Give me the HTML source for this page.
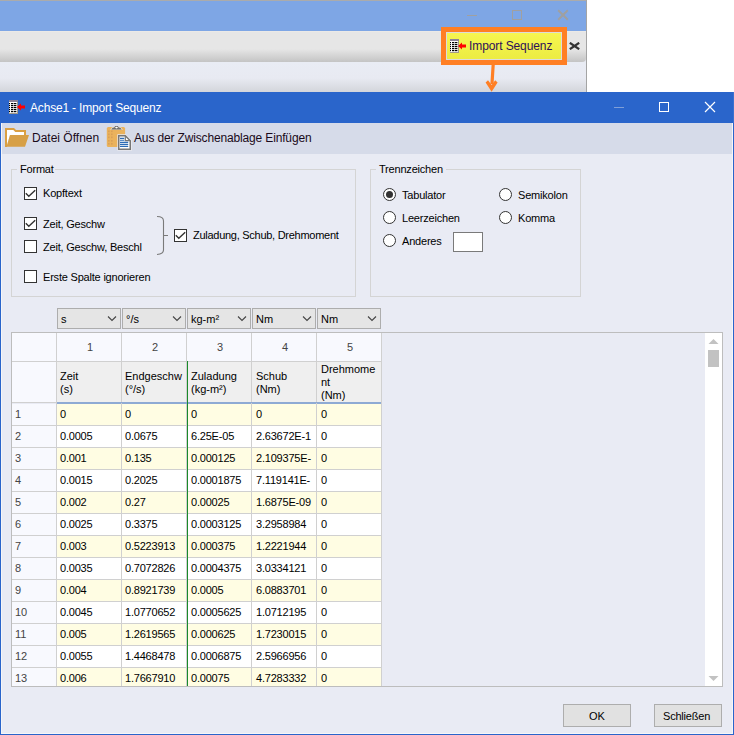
<!DOCTYPE html><html><head><meta charset="utf-8"><style>
html,body{margin:0;padding:0;}
body{width:734px;height:735px;position:relative;overflow:hidden;background:#fff;font-family:"Liberation Sans", sans-serif;}
.t{position:absolute;white-space:pre;}
.b{position:absolute;}
</style></head><body>
<div class="b" style="left:0px;top:0px;width:586px;height:1px;background:#ababab;"></div>
<div class="b" style="left:0px;top:1px;width:586px;height:30px;background:#7ea6e5;"></div>
<div class="b" style="left:467px;top:15px;width:10px;height:1px;background:#a0a0a0;"></div>
<div class="b" style="left:512px;top:10px;width:10px;height:10px;box-sizing:border-box;border:1px solid #a0a0a0;"></div>
<svg class="b" style="left:557px;top:9px" width="12" height="12"><path d="M1.2 1.2 L10.8 10.8 M10.8 1.2 L1.2 10.8" stroke="#a0a0a0" stroke-width="2"/></svg>
<div class="b" style="left:0px;top:31px;width:586px;height:31px;background:#e6e9f1;"></div>
<div class="b" style="left:0px;top:31px;width:586px;height:31px;border-bottom-right-radius:4px;background:linear-gradient(#f0ede8 0px,#e6e6e6 1px,#e6e6e6 18px,#c4c4c4 31px);"></div>
<div class="b" style="left:0px;top:62px;width:586px;height:30px;background:linear-gradient(#e9ecf4 0px,#e8eaf2 16px,#d3d5db 30px);"></div>
<div class="b" style="left:586px;top:0px;width:1px;height:92px;background:#a4a4a4;"></div>
<svg class="b" style="left:569px;top:42px" width="11" height="8"><path d="M0.8 0.8 L10.2 7.2 M10.2 0.8 L0.8 7.2" stroke="#333" stroke-width="2.2"/></svg>
<div class="b" style="left:441px;top:27px;width:126px;height:38px;box-sizing:border-box;border:5px solid #ff7f24;"></div>
<div class="b" style="left:446px;top:32px;width:116px;height:28px;box-sizing:border-box;border:1px solid #dcdcdc;background:linear-gradient(#f6f650,#ecec42);"></div>
<svg class="b" style="left:450px;top:39px" width="17" height="14"><rect x="0" y="0" width="9" height="14" fill="#a49a8a"/><rect x="0" y="0" width="9" height="2" fill="#8a8296"/><rect x="0" y="2" width="8" height="11" fill="#fff"/><rect x="0" y="3" width="1" height="1.2" fill="#000"/><rect x="2" y="3" width="2.4" height="1.2" fill="#000"/><rect x="5" y="3" width="2.4" height="1.2" fill="#000"/><rect x="0" y="5" width="1" height="1.2" fill="#000"/><rect x="2" y="5" width="2.4" height="1.2" fill="#000"/><rect x="5" y="5" width="2.4" height="1.2" fill="#000"/><rect x="0" y="7" width="1" height="1.2" fill="#000"/><rect x="2" y="7" width="2.4" height="1.2" fill="#000"/><rect x="5" y="7" width="2.4" height="1.2" fill="#000"/><rect x="0" y="9" width="1" height="1.2" fill="#000"/><rect x="2" y="9" width="2.4" height="1.2" fill="#000"/><rect x="5" y="9" width="2.4" height="1.2" fill="#000"/><rect x="0" y="11" width="1" height="1.2" fill="#000"/><rect x="2" y="11" width="2.4" height="1.2" fill="#000"/><rect x="5" y="11" width="2.4" height="1.2" fill="#000"/><path d="M8 7 L12 3.5 L12 5.5 L16 5.5 L16 8.5 L12 8.5 L12 10.5 Z" fill="#f00"/></svg>
<div class="t" style="left:469px;top:39.84px;font-size:12px;line-height:12px;color:#2e1058;letter-spacing:-0.1px;">Import Sequenz</div>
<svg class="b" style="left:484px;top:64px" width="16" height="29"><path d="M9.2 0 L8 20" stroke="#ff7f24" stroke-width="3.2" fill="none"/><path d="M1.6 18.6 L4 16.2 L7.6 21 L11.2 16.2 L13.6 18.6 L7.6 27.8 Z" fill="#ff7f24"/></svg>
<div class="b" style="left:0px;top:92px;width:734px;height:643px;background:#2a65cb;"></div>
<div class="b" style="left:1px;top:123px;width:732px;height:31px;background:#d6dbe9;"></div>
<div class="b" style="left:1px;top:154px;width:732px;height:580px;background:#e9ebf4;"></div>
<div class="b" style="left:1px;top:123px;width:1px;height:611px;background:#f6f6f8;"></div>
<div class="b" style="left:732px;top:123px;width:1px;height:611px;background:#f6f6f8;"></div>
<div class="b" style="left:1px;top:733px;width:732px;height:1px;background:#f6f6f8;"></div>
<div class="b" style="left:733px;top:92px;width:1px;height:31px;background:#3a72d0;"></div>
<svg class="b" style="left:9px;top:100px" width="17" height="14"><rect x="0" y="0" width="9" height="14" fill="#a49a8a"/><rect x="0" y="0" width="9" height="2" fill="#8a8296"/><rect x="0" y="2" width="8" height="11" fill="#fff"/><rect x="0" y="3" width="1" height="1.2" fill="#000"/><rect x="2" y="3" width="2.4" height="1.2" fill="#000"/><rect x="5" y="3" width="2.4" height="1.2" fill="#000"/><rect x="0" y="5" width="1" height="1.2" fill="#000"/><rect x="2" y="5" width="2.4" height="1.2" fill="#000"/><rect x="5" y="5" width="2.4" height="1.2" fill="#000"/><rect x="0" y="7" width="1" height="1.2" fill="#000"/><rect x="2" y="7" width="2.4" height="1.2" fill="#000"/><rect x="5" y="7" width="2.4" height="1.2" fill="#000"/><rect x="0" y="9" width="1" height="1.2" fill="#000"/><rect x="2" y="9" width="2.4" height="1.2" fill="#000"/><rect x="5" y="9" width="2.4" height="1.2" fill="#000"/><rect x="0" y="11" width="1" height="1.2" fill="#000"/><rect x="2" y="11" width="2.4" height="1.2" fill="#000"/><rect x="5" y="11" width="2.4" height="1.2" fill="#000"/><path d="M8 7 L12 3.5 L12 5.5 L16 5.5 L16 8.5 L12 8.5 L12 10.5 Z" fill="#f00"/></svg>
<div class="t" style="left:30px;top:102.24px;font-size:12px;line-height:12px;color:#fff;letter-spacing:-0.18px;">Achse1 - Import Sequenz</div>
<div class="b" style="left:614px;top:107px;width:10px;height:1px;background:#7f9fd8;"></div>
<div class="b" style="left:659px;top:102px;width:10px;height:10px;box-sizing:border-box;border:1px solid #fff;"></div>
<svg class="b" style="left:704px;top:101px" width="12" height="12"><path d="M1 1 L11 11 M11 1 L1 11" stroke="#fff" stroke-width="1.2"/></svg>
<svg class="b" style="left:5px;top:128px" width="25" height="19"><path d="M0 0 H9 L11 2 H21 V7 H2 V19 H0 Z" fill="#dba042"/><path d="M2 2 H8.3 L10.3 4 H19 V7 H5 L2 17 Z" fill="#fff"/><path d="M5 7 H24 L20 18.7 H0 L2 17 Z" fill="#d7a047"/></svg>
<div class="t" style="left:32px;top:131.84px;font-size:12px;line-height:12px;color:#1a0a1a;">Datei Öffnen</div>
<svg class="b" style="left:106px;top:125px" width="27" height="26"><rect x="0.8" y="1.9" width="18.3" height="20.1" rx="1.6" fill="#eab25c"/><rect x="2" y="5.5" width="1.6" height="1.6" fill="#d9a058"/><rect x="2" y="8.5" width="1.6" height="1.6" fill="#d9a058"/><rect x="2" y="11.5" width="1.6" height="1.6" fill="#d9a058"/><rect x="2" y="15" width="1.6" height="1.6" fill="#d9a058"/><rect x="2" y="18" width="1.6" height="1.6" fill="#d9a058"/><rect x="5" y="5.5" width="1.6" height="1.6" fill="#d9a058"/><rect x="5" y="8.5" width="1.6" height="1.6" fill="#d9a058"/><rect x="5" y="11.5" width="1.6" height="1.6" fill="#d9a058"/><rect x="5" y="15" width="1.6" height="1.6" fill="#d9a058"/><rect x="5" y="18" width="1.6" height="1.6" fill="#d9a058"/><path d="M4 4.8 L6 2.2 L15 2.2 L17 4.8 Z" fill="#e3dccf"/><path d="M5.3 4.4 Q6.2 2.6 8.2 2.4 L9.2 1 H11.8 L12.8 2.4 Q14.8 2.6 15.7 4.4 Z" fill="#6e6e6e"/><ellipse cx="10.5" cy="2.6" rx="1.3" ry="0.8" fill="#fff"/><path d="M11.3 9.3 H20 L26 15.2 V25.7 H11.3 Z" fill="#e8e8ee"/><path d="M12.75 10.75 H19.3 L24.25 15.7 V24.25 H12.75 Z" fill="#fff" stroke="#777" stroke-width="1.5"/><path d="M19.3 10.75 V15.7 H24.25" fill="none" stroke="#777" stroke-width="1.2"/><path d="M14 13.4 H18.2 M14 15.3 H18.2 M14 17.4 H22.2 M14 19.4 H22.2 M14 21.4 H22.2" stroke="#2d6bb5" stroke-width="1.1"/></svg>
<div class="t" style="left:134px;top:131.54px;font-size:12px;line-height:12px;color:#1a0a1a;letter-spacing:-0.15px;">Aus der Zwischenablage Einfügen</div>
<div class="b" style="left:11px;top:169px;width:345px;height:128px;box-sizing:border-box;border:1px solid #d4d4d4;"></div>
<div class="b" style="left:17px;top:160px;width:38px;height:14px;background:#e9ebf4;"></div>
<div class="t" style="left:20px;top:164.19px;font-size:11px;line-height:11px;color:#000;letter-spacing:-0.2px;">Format</div>
<div class="b" style="left:24px;top:187px;width:13px;height:13px;box-sizing:border-box;border:1px solid #333;background:#fff;"></div>
<svg class="b" style="left:24px;top:187px" width="13" height="13"><path d="M1.8 6.3 L4.8 9.3 L11.2 3.3" fill="none" stroke="#333" stroke-width="1.4"/></svg>
<div class="t" style="left:43px;top:188.19px;font-size:11px;line-height:11px;color:#000;letter-spacing:-0.2px;">Kopftext</div>
<div class="b" style="left:24px;top:217px;width:13px;height:13px;box-sizing:border-box;border:1px solid #333;background:#fff;"></div>
<svg class="b" style="left:24px;top:217px" width="13" height="13"><path d="M1.8 6.3 L4.8 9.3 L11.2 3.3" fill="none" stroke="#333" stroke-width="1.4"/></svg>
<div class="t" style="left:43px;top:218.69px;font-size:11px;line-height:11px;color:#000;letter-spacing:-0.2px;">Zeit, Geschw</div>
<div class="b" style="left:24px;top:240px;width:13px;height:13px;box-sizing:border-box;border:1px solid #333;background:#fff;"></div>
<div class="t" style="left:43px;top:241.69px;font-size:11px;line-height:11px;color:#000;letter-spacing:-0.2px;">Zeit, Geschw, Beschl</div>
<div class="b" style="left:24px;top:270px;width:13px;height:13px;box-sizing:border-box;border:1px solid #333;background:#fff;"></div>
<div class="t" style="left:43px;top:271.69px;font-size:11px;line-height:11px;color:#000;letter-spacing:-0.2px;">Erste Spalte ignorieren</div>
<svg class="b" style="left:150px;top:210px" width="25" height="50"><path d="M7 6.5 Q13.5 6.5 13.5 11 V40 Q13.5 44 7 44.5 M13.5 25.5 H18" fill="none" stroke="#7a7a7a" stroke-width="1.1"/></svg>
<div class="b" style="left:174px;top:229px;width:13px;height:13px;box-sizing:border-box;border:1px solid #333;background:#fff;"></div>
<svg class="b" style="left:174px;top:229px" width="13" height="13"><path d="M1.8 6.3 L4.8 9.3 L11.2 3.3" fill="none" stroke="#333" stroke-width="1.4"/></svg>
<div class="t" style="left:193px;top:230.19px;font-size:11px;line-height:11px;color:#000;letter-spacing:-0.27px;">Zuladung, Schub, Drehmoment</div>
<div class="b" style="left:370px;top:169px;width:211px;height:128px;box-sizing:border-box;border:1px solid #d4d4d4;"></div>
<div class="b" style="left:376px;top:160px;width:70px;height:14px;background:#e9ebf4;"></div>
<div class="t" style="left:379px;top:164.19px;font-size:11px;line-height:11px;color:#000;letter-spacing:-0.2px;">Trennzeichen</div>
<svg class="b" style="left:383px;top:188px" width="14" height="14"><circle cx="6.5" cy="6.5" r="6" fill="#fff" stroke="#333" stroke-width="1"/><circle cx="6.5" cy="6.5" r="3.5" fill="#333"/></svg>
<div class="t" style="left:402px;top:189.69px;font-size:11px;line-height:11px;color:#000;letter-spacing:-0.2px;">Tabulator</div>
<svg class="b" style="left:499px;top:188px" width="14" height="14"><circle cx="6.5" cy="6.5" r="6" fill="#fff" stroke="#333" stroke-width="1"/></svg>
<div class="t" style="left:518px;top:189.69px;font-size:11px;line-height:11px;color:#000;letter-spacing:-0.2px;">Semikolon</div>
<svg class="b" style="left:383px;top:211px" width="14" height="14"><circle cx="6.5" cy="6.5" r="6" fill="#fff" stroke="#333" stroke-width="1"/></svg>
<div class="t" style="left:402px;top:212.69px;font-size:11px;line-height:11px;color:#000;letter-spacing:-0.2px;">Leerzeichen</div>
<svg class="b" style="left:499px;top:211px" width="14" height="14"><circle cx="6.5" cy="6.5" r="6" fill="#fff" stroke="#333" stroke-width="1"/></svg>
<div class="t" style="left:518px;top:212.69px;font-size:11px;line-height:11px;color:#000;letter-spacing:-0.2px;">Komma</div>
<svg class="b" style="left:383px;top:234px" width="14" height="14"><circle cx="6.5" cy="6.5" r="6" fill="#fff" stroke="#333" stroke-width="1"/></svg>
<div class="t" style="left:402px;top:235.69px;font-size:11px;line-height:11px;color:#000;letter-spacing:-0.2px;">Anderes</div>
<div class="b" style="left:453px;top:232px;width:30px;height:20px;box-sizing:border-box;border:1px solid #7a7a7a;background:#fff;"></div>
<div class="b" style="left:57px;top:308px;width:64px;height:21px;box-sizing:border-box;border:1px solid #adadad;background:#e5e5e5;"></div>
<div class="t" style="left:61px;top:313.69px;font-size:11px;line-height:11px;color:#000;">s</div>
<svg class="b" style="left:107px;top:315px" width="10" height="8"><path d="M1 1.5 L5 5.5 L9 1.5" fill="none" stroke="#444" stroke-width="1.1"/></svg>
<div class="b" style="left:122px;top:308px;width:64px;height:21px;box-sizing:border-box;border:1px solid #adadad;background:#e5e5e5;"></div>
<div class="t" style="left:126px;top:313.69px;font-size:11px;line-height:11px;color:#000;">°/s</div>
<svg class="b" style="left:172px;top:315px" width="10" height="8"><path d="M1 1.5 L5 5.5 L9 1.5" fill="none" stroke="#444" stroke-width="1.1"/></svg>
<div class="b" style="left:187px;top:308px;width:64px;height:21px;box-sizing:border-box;border:1px solid #adadad;background:#e5e5e5;"></div>
<div class="t" style="left:191px;top:313.69px;font-size:11px;line-height:11px;color:#000;">kg-m²</div>
<svg class="b" style="left:237px;top:315px" width="10" height="8"><path d="M1 1.5 L5 5.5 L9 1.5" fill="none" stroke="#444" stroke-width="1.1"/></svg>
<div class="b" style="left:252px;top:308px;width:64px;height:21px;box-sizing:border-box;border:1px solid #adadad;background:#e5e5e5;"></div>
<div class="t" style="left:256px;top:313.69px;font-size:11px;line-height:11px;color:#000;">Nm</div>
<svg class="b" style="left:302px;top:315px" width="10" height="8"><path d="M1 1.5 L5 5.5 L9 1.5" fill="none" stroke="#444" stroke-width="1.1"/></svg>
<div class="b" style="left:317px;top:308px;width:64px;height:21px;box-sizing:border-box;border:1px solid #adadad;background:#e5e5e5;"></div>
<div class="t" style="left:321px;top:313.69px;font-size:11px;line-height:11px;color:#000;">Nm</div>
<svg class="b" style="left:367px;top:315px" width="10" height="8"><path d="M1 1.5 L5 5.5 L9 1.5" fill="none" stroke="#444" stroke-width="1.1"/></svg>
<div class="b" style="left:11px;top:332px;width:712px;height:355px;box-sizing:border-box;border:1px solid #bdbdbd;background:#e9ebf4;"></div>
<div class="b" style="left:12px;top:333px;width:44px;height:28px;background:#f8f9fe;"></div>
<div class="b" style="left:57px;top:333px;width:64px;height:28px;background:#f8f9fe;"></div>
<div class="t" style="left:87px;top:341.69px;font-size:11px;line-height:11px;color:#444;">1</div>
<div class="b" style="left:122px;top:333px;width:64px;height:28px;background:#f8f9fe;"></div>
<div class="t" style="left:152px;top:341.69px;font-size:11px;line-height:11px;color:#444;">2</div>
<div class="b" style="left:187px;top:333px;width:64px;height:28px;background:#f8f9fe;"></div>
<div class="t" style="left:217px;top:341.69px;font-size:11px;line-height:11px;color:#444;">3</div>
<div class="b" style="left:252px;top:333px;width:64px;height:28px;background:#f8f9fe;"></div>
<div class="t" style="left:282px;top:341.69px;font-size:11px;line-height:11px;color:#444;">4</div>
<div class="b" style="left:317px;top:333px;width:64px;height:28px;background:#f8f9fe;"></div>
<div class="t" style="left:347px;top:341.69px;font-size:11px;line-height:11px;color:#444;">5</div>
<div class="b" style="left:56px;top:333px;width:1px;height:353px;background:#d0d0d0;"></div>
<div class="b" style="left:121px;top:333px;width:1px;height:353px;background:#d0d0d0;"></div>
<div class="b" style="left:186px;top:333px;width:1px;height:353px;background:#d0d0d0;"></div>
<div class="b" style="left:251px;top:333px;width:1px;height:353px;background:#d0d0d0;"></div>
<div class="b" style="left:316px;top:333px;width:1px;height:353px;background:#d0d0d0;"></div>
<div class="b" style="left:381px;top:333px;width:1px;height:353px;background:#d0d0d0;"></div>
<div class="b" style="left:12px;top:361px;width:370px;height:1px;background:#d0d0d0;"></div>
<div class="b" style="left:12px;top:362px;width:44px;height:40px;background:#f8f9fe;"></div>
<div class="b" style="left:57px;top:362px;width:64px;height:40px;background:#efefef;"></div>
<div class="t" style="left:60px;top:371.19px;font-size:11px;line-height:11px;color:#000;">Zeit</div>
<div class="t" style="left:60px;top:384.19px;font-size:11px;line-height:11px;color:#000;">(s)</div>
<div class="b" style="left:122px;top:362px;width:64px;height:40px;background:#efefef;"></div>
<div class="t" style="left:125px;top:371.19px;font-size:11px;line-height:11px;color:#000;">Endgeschw</div>
<div class="t" style="left:125px;top:384.19px;font-size:11px;line-height:11px;color:#000;">(°/s)</div>
<div class="b" style="left:187px;top:362px;width:64px;height:40px;background:#efefef;"></div>
<div class="t" style="left:191px;top:371.19px;font-size:11px;line-height:11px;color:#000;">Zuladung</div>
<div class="t" style="left:191px;top:384.19px;font-size:11px;line-height:11px;color:#000;">(kg-m²)</div>
<div class="b" style="left:252px;top:362px;width:64px;height:40px;background:#efefef;"></div>
<div class="t" style="left:256px;top:371.19px;font-size:11px;line-height:11px;color:#000;">Schub</div>
<div class="t" style="left:256px;top:384.19px;font-size:11px;line-height:11px;color:#000;">(Nm)</div>
<div class="b" style="left:317px;top:362px;width:64px;height:40px;background:#efefef;"></div>
<div class="t" style="left:321px;top:363.69px;font-size:11px;line-height:11px;color:#000;">Drehmome</div>
<div class="t" style="left:321px;top:376.69px;font-size:11px;line-height:11px;color:#000;">nt</div>
<div class="t" style="left:321px;top:389.69px;font-size:11px;line-height:11px;color:#000;">(Nm)</div>
<div class="b" style="left:57px;top:402px;width:324px;height:2px;background:#8eaad4;"></div>
<div class="b" style="left:12px;top:402px;width:44px;height:1px;background:#d0d0d0;"></div>
<div class="b" style="left:12px;top:404px;width:44px;height:21px;background:#f8f9fe;"></div>
<div class="b" style="left:57px;top:404px;width:64px;height:21px;background:#fffde3;"></div>
<div class="b" style="left:122px;top:404px;width:64px;height:21px;background:#fffde3;"></div>
<div class="b" style="left:187px;top:404px;width:64px;height:21px;background:#fffde3;"></div>
<div class="b" style="left:252px;top:404px;width:64px;height:21px;background:#fffde3;"></div>
<div class="b" style="left:317px;top:404px;width:64px;height:21px;background:#fffde3;"></div>
<div class="b" style="left:12px;top:426px;width:44px;height:21px;background:#f8f9fe;"></div>
<div class="b" style="left:57px;top:426px;width:64px;height:21px;background:#ffffff;"></div>
<div class="b" style="left:122px;top:426px;width:64px;height:21px;background:#ffffff;"></div>
<div class="b" style="left:187px;top:426px;width:64px;height:21px;background:#ffffff;"></div>
<div class="b" style="left:252px;top:426px;width:64px;height:21px;background:#ffffff;"></div>
<div class="b" style="left:317px;top:426px;width:64px;height:21px;background:#ffffff;"></div>
<div class="b" style="left:12px;top:425px;width:370px;height:1px;background:#d0d0d0;"></div>
<div class="b" style="left:12px;top:448px;width:44px;height:21px;background:#f8f9fe;"></div>
<div class="b" style="left:57px;top:448px;width:64px;height:21px;background:#fffde3;"></div>
<div class="b" style="left:122px;top:448px;width:64px;height:21px;background:#fffde3;"></div>
<div class="b" style="left:187px;top:448px;width:64px;height:21px;background:#fffde3;"></div>
<div class="b" style="left:252px;top:448px;width:64px;height:21px;background:#fffde3;"></div>
<div class="b" style="left:317px;top:448px;width:64px;height:21px;background:#fffde3;"></div>
<div class="b" style="left:12px;top:447px;width:370px;height:1px;background:#d0d0d0;"></div>
<div class="b" style="left:12px;top:470px;width:44px;height:21px;background:#f8f9fe;"></div>
<div class="b" style="left:57px;top:470px;width:64px;height:21px;background:#ffffff;"></div>
<div class="b" style="left:122px;top:470px;width:64px;height:21px;background:#ffffff;"></div>
<div class="b" style="left:187px;top:470px;width:64px;height:21px;background:#ffffff;"></div>
<div class="b" style="left:252px;top:470px;width:64px;height:21px;background:#ffffff;"></div>
<div class="b" style="left:317px;top:470px;width:64px;height:21px;background:#ffffff;"></div>
<div class="b" style="left:12px;top:469px;width:370px;height:1px;background:#d0d0d0;"></div>
<div class="b" style="left:12px;top:492px;width:44px;height:21px;background:#f8f9fe;"></div>
<div class="b" style="left:57px;top:492px;width:64px;height:21px;background:#fffde3;"></div>
<div class="b" style="left:122px;top:492px;width:64px;height:21px;background:#fffde3;"></div>
<div class="b" style="left:187px;top:492px;width:64px;height:21px;background:#fffde3;"></div>
<div class="b" style="left:252px;top:492px;width:64px;height:21px;background:#fffde3;"></div>
<div class="b" style="left:317px;top:492px;width:64px;height:21px;background:#fffde3;"></div>
<div class="b" style="left:12px;top:491px;width:370px;height:1px;background:#d0d0d0;"></div>
<div class="b" style="left:12px;top:514px;width:44px;height:21px;background:#f8f9fe;"></div>
<div class="b" style="left:57px;top:514px;width:64px;height:21px;background:#ffffff;"></div>
<div class="b" style="left:122px;top:514px;width:64px;height:21px;background:#ffffff;"></div>
<div class="b" style="left:187px;top:514px;width:64px;height:21px;background:#ffffff;"></div>
<div class="b" style="left:252px;top:514px;width:64px;height:21px;background:#ffffff;"></div>
<div class="b" style="left:317px;top:514px;width:64px;height:21px;background:#ffffff;"></div>
<div class="b" style="left:12px;top:513px;width:370px;height:1px;background:#d0d0d0;"></div>
<div class="b" style="left:12px;top:536px;width:44px;height:21px;background:#f8f9fe;"></div>
<div class="b" style="left:57px;top:536px;width:64px;height:21px;background:#fffde3;"></div>
<div class="b" style="left:122px;top:536px;width:64px;height:21px;background:#fffde3;"></div>
<div class="b" style="left:187px;top:536px;width:64px;height:21px;background:#fffde3;"></div>
<div class="b" style="left:252px;top:536px;width:64px;height:21px;background:#fffde3;"></div>
<div class="b" style="left:317px;top:536px;width:64px;height:21px;background:#fffde3;"></div>
<div class="b" style="left:12px;top:535px;width:370px;height:1px;background:#d0d0d0;"></div>
<div class="b" style="left:12px;top:558px;width:44px;height:21px;background:#f8f9fe;"></div>
<div class="b" style="left:57px;top:558px;width:64px;height:21px;background:#ffffff;"></div>
<div class="b" style="left:122px;top:558px;width:64px;height:21px;background:#ffffff;"></div>
<div class="b" style="left:187px;top:558px;width:64px;height:21px;background:#ffffff;"></div>
<div class="b" style="left:252px;top:558px;width:64px;height:21px;background:#ffffff;"></div>
<div class="b" style="left:317px;top:558px;width:64px;height:21px;background:#ffffff;"></div>
<div class="b" style="left:12px;top:557px;width:370px;height:1px;background:#d0d0d0;"></div>
<div class="b" style="left:12px;top:580px;width:44px;height:21px;background:#f8f9fe;"></div>
<div class="b" style="left:57px;top:580px;width:64px;height:21px;background:#fffde3;"></div>
<div class="b" style="left:122px;top:580px;width:64px;height:21px;background:#fffde3;"></div>
<div class="b" style="left:187px;top:580px;width:64px;height:21px;background:#fffde3;"></div>
<div class="b" style="left:252px;top:580px;width:64px;height:21px;background:#fffde3;"></div>
<div class="b" style="left:317px;top:580px;width:64px;height:21px;background:#fffde3;"></div>
<div class="b" style="left:12px;top:579px;width:370px;height:1px;background:#d0d0d0;"></div>
<div class="b" style="left:12px;top:602px;width:44px;height:21px;background:#f8f9fe;"></div>
<div class="b" style="left:57px;top:602px;width:64px;height:21px;background:#ffffff;"></div>
<div class="b" style="left:122px;top:602px;width:64px;height:21px;background:#ffffff;"></div>
<div class="b" style="left:187px;top:602px;width:64px;height:21px;background:#ffffff;"></div>
<div class="b" style="left:252px;top:602px;width:64px;height:21px;background:#ffffff;"></div>
<div class="b" style="left:317px;top:602px;width:64px;height:21px;background:#ffffff;"></div>
<div class="b" style="left:12px;top:601px;width:370px;height:1px;background:#d0d0d0;"></div>
<div class="b" style="left:12px;top:624px;width:44px;height:21px;background:#f8f9fe;"></div>
<div class="b" style="left:57px;top:624px;width:64px;height:21px;background:#fffde3;"></div>
<div class="b" style="left:122px;top:624px;width:64px;height:21px;background:#fffde3;"></div>
<div class="b" style="left:187px;top:624px;width:64px;height:21px;background:#fffde3;"></div>
<div class="b" style="left:252px;top:624px;width:64px;height:21px;background:#fffde3;"></div>
<div class="b" style="left:317px;top:624px;width:64px;height:21px;background:#fffde3;"></div>
<div class="b" style="left:12px;top:623px;width:370px;height:1px;background:#d0d0d0;"></div>
<div class="b" style="left:12px;top:646px;width:44px;height:21px;background:#f8f9fe;"></div>
<div class="b" style="left:57px;top:646px;width:64px;height:21px;background:#ffffff;"></div>
<div class="b" style="left:122px;top:646px;width:64px;height:21px;background:#ffffff;"></div>
<div class="b" style="left:187px;top:646px;width:64px;height:21px;background:#ffffff;"></div>
<div class="b" style="left:252px;top:646px;width:64px;height:21px;background:#ffffff;"></div>
<div class="b" style="left:317px;top:646px;width:64px;height:21px;background:#ffffff;"></div>
<div class="b" style="left:12px;top:645px;width:370px;height:1px;background:#d0d0d0;"></div>
<div class="b" style="left:12px;top:668px;width:44px;height:18px;background:#f8f9fe;"></div>
<div class="b" style="left:57px;top:668px;width:64px;height:18px;background:#fffde3;"></div>
<div class="b" style="left:122px;top:668px;width:64px;height:18px;background:#fffde3;"></div>
<div class="b" style="left:187px;top:668px;width:64px;height:18px;background:#fffde3;"></div>
<div class="b" style="left:252px;top:668px;width:64px;height:18px;background:#fffde3;"></div>
<div class="b" style="left:317px;top:668px;width:64px;height:18px;background:#fffde3;"></div>
<div class="b" style="left:12px;top:667px;width:370px;height:1px;background:#d0d0d0;"></div>
<div class="t" style="left:15px;top:409.19px;font-size:11px;line-height:11px;color:#444;">1</div>
<div class="t" style="left:60px;top:409.19px;font-size:11px;line-height:11px;color:#000;letter-spacing:-0.2px;">0</div>
<div class="t" style="left:125px;top:409.19px;font-size:11px;line-height:11px;color:#000;letter-spacing:-0.2px;">0</div>
<div class="t" style="left:191px;top:409.19px;font-size:11px;line-height:11px;color:#000;letter-spacing:-0.2px;">0</div>
<div class="t" style="left:256px;top:409.19px;font-size:11px;line-height:11px;color:#000;letter-spacing:-0.2px;">0</div>
<div class="t" style="left:321px;top:409.19px;font-size:11px;line-height:11px;color:#000;letter-spacing:-0.2px;">0</div>
<div class="t" style="left:15px;top:431.19px;font-size:11px;line-height:11px;color:#444;">2</div>
<div class="t" style="left:60px;top:431.19px;font-size:11px;line-height:11px;color:#000;letter-spacing:-0.2px;">0.0005</div>
<div class="t" style="left:125px;top:431.19px;font-size:11px;line-height:11px;color:#000;letter-spacing:-0.2px;">0.0675</div>
<div class="t" style="left:191px;top:431.19px;font-size:11px;line-height:11px;color:#000;letter-spacing:-0.2px;">6.25E-05</div>
<div class="t" style="left:256px;top:431.19px;font-size:11px;line-height:11px;color:#000;letter-spacing:-0.2px;">2.63672E-1</div>
<div class="t" style="left:321px;top:431.19px;font-size:11px;line-height:11px;color:#000;letter-spacing:-0.2px;">0</div>
<div class="t" style="left:15px;top:453.19px;font-size:11px;line-height:11px;color:#444;">3</div>
<div class="t" style="left:60px;top:453.19px;font-size:11px;line-height:11px;color:#000;letter-spacing:-0.2px;">0.001</div>
<div class="t" style="left:125px;top:453.19px;font-size:11px;line-height:11px;color:#000;letter-spacing:-0.2px;">0.135</div>
<div class="t" style="left:191px;top:453.19px;font-size:11px;line-height:11px;color:#000;letter-spacing:-0.2px;">0.000125</div>
<div class="t" style="left:256px;top:453.19px;font-size:11px;line-height:11px;color:#000;letter-spacing:-0.2px;">2.109375E-</div>
<div class="t" style="left:321px;top:453.19px;font-size:11px;line-height:11px;color:#000;letter-spacing:-0.2px;">0</div>
<div class="t" style="left:15px;top:475.19px;font-size:11px;line-height:11px;color:#444;">4</div>
<div class="t" style="left:60px;top:475.19px;font-size:11px;line-height:11px;color:#000;letter-spacing:-0.2px;">0.0015</div>
<div class="t" style="left:125px;top:475.19px;font-size:11px;line-height:11px;color:#000;letter-spacing:-0.2px;">0.2025</div>
<div class="t" style="left:191px;top:475.19px;font-size:11px;line-height:11px;color:#000;letter-spacing:-0.2px;">0.0001875</div>
<div class="t" style="left:256px;top:475.19px;font-size:11px;line-height:11px;color:#000;letter-spacing:-0.2px;">7.119141E-</div>
<div class="t" style="left:321px;top:475.19px;font-size:11px;line-height:11px;color:#000;letter-spacing:-0.2px;">0</div>
<div class="t" style="left:15px;top:497.19px;font-size:11px;line-height:11px;color:#444;">5</div>
<div class="t" style="left:60px;top:497.19px;font-size:11px;line-height:11px;color:#000;letter-spacing:-0.2px;">0.002</div>
<div class="t" style="left:125px;top:497.19px;font-size:11px;line-height:11px;color:#000;letter-spacing:-0.2px;">0.27</div>
<div class="t" style="left:191px;top:497.19px;font-size:11px;line-height:11px;color:#000;letter-spacing:-0.2px;">0.00025</div>
<div class="t" style="left:256px;top:497.19px;font-size:11px;line-height:11px;color:#000;letter-spacing:-0.2px;">1.6875E-09</div>
<div class="t" style="left:321px;top:497.19px;font-size:11px;line-height:11px;color:#000;letter-spacing:-0.2px;">0</div>
<div class="t" style="left:15px;top:519.19px;font-size:11px;line-height:11px;color:#444;">6</div>
<div class="t" style="left:60px;top:519.19px;font-size:11px;line-height:11px;color:#000;letter-spacing:-0.2px;">0.0025</div>
<div class="t" style="left:125px;top:519.19px;font-size:11px;line-height:11px;color:#000;letter-spacing:-0.2px;">0.3375</div>
<div class="t" style="left:191px;top:519.19px;font-size:11px;line-height:11px;color:#000;letter-spacing:-0.2px;">0.0003125</div>
<div class="t" style="left:256px;top:519.19px;font-size:11px;line-height:11px;color:#000;letter-spacing:-0.2px;">3.2958984</div>
<div class="t" style="left:321px;top:519.19px;font-size:11px;line-height:11px;color:#000;letter-spacing:-0.2px;">0</div>
<div class="t" style="left:15px;top:541.19px;font-size:11px;line-height:11px;color:#444;">7</div>
<div class="t" style="left:60px;top:541.19px;font-size:11px;line-height:11px;color:#000;letter-spacing:-0.2px;">0.003</div>
<div class="t" style="left:125px;top:541.19px;font-size:11px;line-height:11px;color:#000;letter-spacing:-0.2px;">0.5223913</div>
<div class="t" style="left:191px;top:541.19px;font-size:11px;line-height:11px;color:#000;letter-spacing:-0.2px;">0.000375</div>
<div class="t" style="left:256px;top:541.19px;font-size:11px;line-height:11px;color:#000;letter-spacing:-0.2px;">1.2221944</div>
<div class="t" style="left:321px;top:541.19px;font-size:11px;line-height:11px;color:#000;letter-spacing:-0.2px;">0</div>
<div class="t" style="left:15px;top:563.19px;font-size:11px;line-height:11px;color:#444;">8</div>
<div class="t" style="left:60px;top:563.19px;font-size:11px;line-height:11px;color:#000;letter-spacing:-0.2px;">0.0035</div>
<div class="t" style="left:125px;top:563.19px;font-size:11px;line-height:11px;color:#000;letter-spacing:-0.2px;">0.7072826</div>
<div class="t" style="left:191px;top:563.19px;font-size:11px;line-height:11px;color:#000;letter-spacing:-0.2px;">0.0004375</div>
<div class="t" style="left:256px;top:563.19px;font-size:11px;line-height:11px;color:#000;letter-spacing:-0.2px;">3.0334121</div>
<div class="t" style="left:321px;top:563.19px;font-size:11px;line-height:11px;color:#000;letter-spacing:-0.2px;">0</div>
<div class="t" style="left:15px;top:585.19px;font-size:11px;line-height:11px;color:#444;">9</div>
<div class="t" style="left:60px;top:585.19px;font-size:11px;line-height:11px;color:#000;letter-spacing:-0.2px;">0.004</div>
<div class="t" style="left:125px;top:585.19px;font-size:11px;line-height:11px;color:#000;letter-spacing:-0.2px;">0.8921739</div>
<div class="t" style="left:191px;top:585.19px;font-size:11px;line-height:11px;color:#000;letter-spacing:-0.2px;">0.0005</div>
<div class="t" style="left:256px;top:585.19px;font-size:11px;line-height:11px;color:#000;letter-spacing:-0.2px;">6.0883701</div>
<div class="t" style="left:321px;top:585.19px;font-size:11px;line-height:11px;color:#000;letter-spacing:-0.2px;">0</div>
<div class="t" style="left:15px;top:607.19px;font-size:11px;line-height:11px;color:#444;">10</div>
<div class="t" style="left:60px;top:607.19px;font-size:11px;line-height:11px;color:#000;letter-spacing:-0.2px;">0.0045</div>
<div class="t" style="left:125px;top:607.19px;font-size:11px;line-height:11px;color:#000;letter-spacing:-0.2px;">1.0770652</div>
<div class="t" style="left:191px;top:607.19px;font-size:11px;line-height:11px;color:#000;letter-spacing:-0.2px;">0.0005625</div>
<div class="t" style="left:256px;top:607.19px;font-size:11px;line-height:11px;color:#000;letter-spacing:-0.2px;">1.0712195</div>
<div class="t" style="left:321px;top:607.19px;font-size:11px;line-height:11px;color:#000;letter-spacing:-0.2px;">0</div>
<div class="t" style="left:15px;top:629.19px;font-size:11px;line-height:11px;color:#444;">11</div>
<div class="t" style="left:60px;top:629.19px;font-size:11px;line-height:11px;color:#000;letter-spacing:-0.2px;">0.005</div>
<div class="t" style="left:125px;top:629.19px;font-size:11px;line-height:11px;color:#000;letter-spacing:-0.2px;">1.2619565</div>
<div class="t" style="left:191px;top:629.19px;font-size:11px;line-height:11px;color:#000;letter-spacing:-0.2px;">0.000625</div>
<div class="t" style="left:256px;top:629.19px;font-size:11px;line-height:11px;color:#000;letter-spacing:-0.2px;">1.7230015</div>
<div class="t" style="left:321px;top:629.19px;font-size:11px;line-height:11px;color:#000;letter-spacing:-0.2px;">0</div>
<div class="t" style="left:15px;top:651.19px;font-size:11px;line-height:11px;color:#444;">12</div>
<div class="t" style="left:60px;top:651.19px;font-size:11px;line-height:11px;color:#000;letter-spacing:-0.2px;">0.0055</div>
<div class="t" style="left:125px;top:651.19px;font-size:11px;line-height:11px;color:#000;letter-spacing:-0.2px;">1.4468478</div>
<div class="t" style="left:191px;top:651.19px;font-size:11px;line-height:11px;color:#000;letter-spacing:-0.2px;">0.0006875</div>
<div class="t" style="left:256px;top:651.19px;font-size:11px;line-height:11px;color:#000;letter-spacing:-0.2px;">2.5966956</div>
<div class="t" style="left:321px;top:651.19px;font-size:11px;line-height:11px;color:#000;letter-spacing:-0.2px;">0</div>
<div class="t" style="left:15px;top:673.19px;font-size:11px;line-height:11px;color:#444;">13</div>
<div class="t" style="left:60px;top:673.19px;font-size:11px;line-height:11px;color:#000;letter-spacing:-0.2px;">0.006</div>
<div class="t" style="left:125px;top:673.19px;font-size:11px;line-height:11px;color:#000;letter-spacing:-0.2px;">1.7667910</div>
<div class="t" style="left:191px;top:673.19px;font-size:11px;line-height:11px;color:#000;letter-spacing:-0.2px;">0.00075</div>
<div class="t" style="left:256px;top:673.19px;font-size:11px;line-height:11px;color:#000;letter-spacing:-0.2px;">4.7283332</div>
<div class="t" style="left:321px;top:673.19px;font-size:11px;line-height:11px;color:#000;letter-spacing:-0.2px;">0</div>
<div class="b" style="left:56px;top:403px;width:1px;height:283px;background:#d0d0d0;"></div>
<div class="b" style="left:121px;top:403px;width:1px;height:283px;background:#d0d0d0;"></div>
<div class="b" style="left:251px;top:403px;width:1px;height:283px;background:#d0d0d0;"></div>
<div class="b" style="left:316px;top:403px;width:1px;height:283px;background:#d0d0d0;"></div>
<div class="b" style="left:381px;top:403px;width:1px;height:283px;background:#d0d0d0;"></div>
<div class="b" style="left:187px;top:361px;width:1px;height:325px;background:#1a8a2a;"></div>
<div class="b" style="left:705px;top:333px;width:17px;height:353px;background:#fff;"></div>
<svg class="b" style="left:708px;top:338px" width="11" height="7"><path d="M0.5 6 L5.5 1 L10.5 6 Z" fill="#c2c2c2"/></svg>
<div class="b" style="left:708px;top:350px;width:11px;height:17px;background:#c2c2c2;"></div>
<svg class="b" style="left:708px;top:675px" width="11" height="7"><path d="M0.5 1 L5.5 6 L10.5 1 Z" fill="#c2c2c2"/></svg>
<div class="b" style="left:563px;top:704px;width:68px;height:23px;box-sizing:border-box;border:1px solid #adadad;background:#e1e1e1;"></div>
<div class="b" style="left:654px;top:704px;width:68px;height:23px;box-sizing:border-box;border:1px solid #adadad;background:#e1e1e1;"></div>

<div class="t" style="left:589px;top:710.69px;font-size:11px;line-height:11px;color:#000;">OK</div>
<div class="t" style="left:663px;top:710.69px;font-size:11px;line-height:11px;color:#000;letter-spacing:-0.2px;">Schließen</div>
</body></html>
